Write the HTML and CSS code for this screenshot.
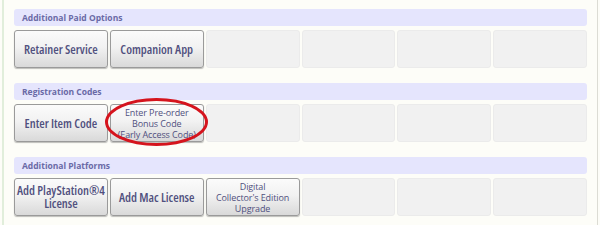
FILE: index.html
```html
<!DOCTYPE html>
<html lang="en">
<head>
    <meta charset="UTF-8">
    <meta name="viewport" content="width=device-width, initial-scale=1.0">
    <title>Service Account</title>
    <link rel="stylesheet" href="styles.css">
</head>
<body>
    <div class="panel">
        <div class="section">
            <div class="section-title">Additional Paid Options</div>
            <div class="buttons">
                <div class="btn"><span>Retainer Service</span></div>
                <div class="btn"><span>Companion App</span></div>
                <div class="empty"></div>
                <div class="empty"></div>
                <div class="empty"></div>
                <div class="empty"></div>
            </div>
        </div>
        <div class="section">
            <div class="section-title">Registration Codes</div>
            <div class="buttons">
                <div class="btn"><span>Enter Item Code</span></div>
                <div class="btn small highlighted"><span>Enter Pre-order<br>Bonus Code<br>(Early Access Code)</span></div>
                <div class="empty"></div>
                <div class="empty"></div>
                <div class="empty"></div>
                <div class="empty"></div>
            </div>
        </div>
        <div class="section">
            <div class="section-title">Additional Platforms</div>
            <div class="buttons">
                <div class="btn"><span>Add PlayStation®4<br>License</span></div>
                <div class="btn"><span>Add Mac License</span></div>
                <div class="btn small"><span>Digital<br>Collector's Edition<br>Upgrade</span></div>
                <div class="empty"></div>
                <div class="empty"></div>
                <div class="empty"></div>
            </div>
        </div>
    </div>
</body>
</html>
```

FILE: styles.css
```css
html {
    box-sizing: border-box;
    font-family: "Open Sans", "DejaVu Sans", sans-serif;
    color: #4c4c7c;
}
* {
    box-sizing: inherit;
    padding: 0;
    margin: 0;
}
body {
    background-color: #fdfdf8;
    height: 225px;
    overflow: hidden;
}
.panel {
    margin: 0 2px 0 2px;
    height: 225px;
    border-left: 2px solid #e1eedb;
    border-right: 1px solid #dcdcd4;
    padding: 9px 10px 0 10px;
}
.section {
    margin-bottom: 15px;
}
.section-title {
    height: 17px;
    padding-left: 8px;
    border-radius: 3px;
    background-color: #e5e5fd;

    font-size: 8.5px;
    font-weight: 700;
    line-height: 17px;
    color: #6a6aa6;
}

/* buttons-start */
    .buttons {
        display: grid;
        grid-template-columns: repeat(6, 1fr);
        gap: 2px;
        height: 38px;
        margin-top: 4px;
    }
    .btn, .empty {
        display: flex;
        align-items: center;
        justify-content: center;
        border-radius: 3px;
    }
    .btn {
        position: relative;
        border: 1px solid #9a9a9a;
        background: linear-gradient(#fbfbfb, #f2f2f2 45%, #d9d9d9);
        box-shadow: 0 1px 1px rgba(0, 0, 0, 0.25);

        font-size: 12.5px;
        font-weight: 600;
        font-stretch: 75%;
        line-height: 13px;
        text-align: center;
        white-space: nowrap;
        color: #50507e;
    }
    .btn.small {
        font-size: 9px;
        font-weight: 500;
        font-stretch: 100%;
        letter-spacing: -0.1px;
        line-height: 11px;
    }
    .empty {
        background-color: #f1f1f1;
        border: 1px solid #ebebeb;
    }

    /* red circle drawn over the pre-order button */
    .highlighted::after {
        content: "";
        position: absolute;
        top: -7px;
        left: -6px;
        right: -5px;
        bottom: -5px;
        border: 3.5px solid #d5141d;
        border-radius: 50%;
    }
/* buttons-end */
```
